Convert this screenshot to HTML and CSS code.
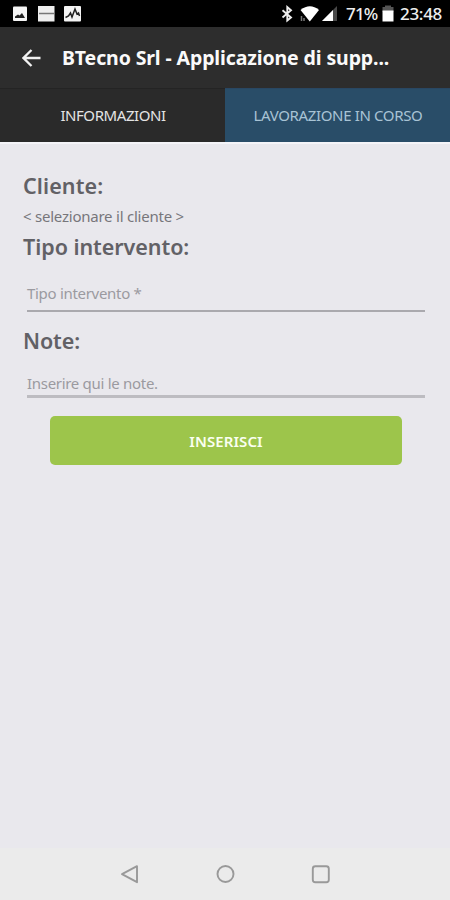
FILE: index.html
```html
<!DOCTYPE html>
<html lang="it">
<head>
<meta charset="utf-8">
<title>BTecno Srl</title>
<link rel="stylesheet" href="styles.css">
</head>
<body>
<div class="screen">
  <div class="status">
    <svg class="status-left" width="82" height="27" viewBox="0 0 82 27">
      <rect x="13" y="6.500" width="14" height="14.500" rx="1" fill="#f4f4f4"/>
      <path d="M15 18v-1.500l3-2 1.500 1 2.500-2.500 3 5z" fill="#222"/>
      <rect x="38" y="6" width="16.500" height="15.500" fill="#eee"/>
      <path d="M39 13.500h15" stroke="#777" stroke-width="1.500"/>
      <rect x="64" y="6" width="17" height="15.500" rx="1" fill="#f4f4f4"/>
      <path d="M65.500 17.500l3-1.500 2-3 1.500 4 3-8 2 5 1.500-1 1 3" stroke="#222" stroke-width="1.500" fill="none"/>
    </svg>
    <div class="status-right">
      <svg width="60" height="27" viewBox="278 0 60 27">
        <path d="M282.500 10.200l8.500 7.300-3.700 3V7l3.700 3.200-8.500 7.300" stroke="#eee" stroke-width="1.900" fill="none"/>
        <path d="M300.500 10q9.500-7.500 18.500 0l-9.200 11.500z" fill="#fff"/>
        <path d="M301.500 16v5M304 18v3" stroke="#777" stroke-width="1.500"/>
        <path d="M337 6v15h-15z" fill="#484848"/>
        <path d="M333 10v11h-11z" fill="#fff"/>
      </svg>
      <span class="percent">71%</span>
      <svg class="battery" width="12" height="27" viewBox="0 0 12 27">
        <path d="M3 5.500h6V7h2.500v5H.5V7H3z" fill="#555"/><path d="M.5 10.500h11v11H.5z" fill="#fff"/>
      </svg>
      <span class="clock">23:48</span>
    </div>
  </div>
  <header class="bar">
    <svg width="20" height="20" viewBox="0 0 20 20"><path d="M18.500 10H2M9.500 2L1.500 10l8 8" fill="none" stroke="#f2f2f2" stroke-width="2.300"/></svg>
    <h1>BTecno Srl - Applicazione di supp...</h1>
  </header>
  <nav class="tabs">
    <div class="tab"><span class="tab-info">INFORMAZIONI</span></div>
    <div class="tab active"><span class="tab-work">LAVORAZIONE IN CORSO</span></div>
  </nav>
  <main>
    <h2 class="h-client">Cliente:</h2>
    <p class="client">&lt; selezionare il cliente &gt;</p>
    <h2 class="h-type">Tipo intervento:</h2>
    <div class="field type"><span>Tipo intervento *</span></div>
    <h2 class="h-note">Note:</h2>
    <div class="field note"><span>Inserire qui le note.</span></div>
    <div class="button"><span>INSERISCI</span></div>
  </main>
  <footer>
    <svg width="450" height="52" viewBox="0 848 450 52" fill="none" stroke="#999" stroke-width="1.900" stroke-linejoin="round">
      <path d="M122 874.200l15-8v16z"/><circle cx="225.500" cy="874" r="8"/><rect x="312.800" y="866.200" width="16" height="16" rx="2.500"/>
    </svg>
  </footer>
</div>
</body>
</html>
```
FILE: styles.css
```css
* { box-sizing: border-box; margin: 0; padding: 0; }
body { width: 450px; height: 900px; overflow: hidden; font-family: "Noto Sans", sans-serif; background: #e9e8ed; }
.screen { height: 900px; display: flex; flex-direction: column; }
svg { display: block; flex: none; }
span, h1, h2, p { white-space: nowrap; }
.status { height: 27px; background: #000; color: #eee; display: flex; justify-content: space-between; }
.status-right { display: flex; width: 172px; line-height: 28px; font-size: 17px; font-weight: 500; }
.percent { width: 36px; margin-left: 8px; letter-spacing: -0.8px; }
.battery { margin-left: 0; }
.clock { margin-left: 6px; letter-spacing: -0.3px; }
.bar { height: 61px; background: #2d2d2d; display: flex; align-items: center; padding-left: 22px; }
h1 { margin-left: 20px; color: #fafafa; font-size: 19.5px; font-weight: 700; letter-spacing: -0.12px; line-height: 26px; padding-top: 1px; }
.tabs { display: flex; height: 54px; }
.tab { flex: 1; background: #2a2a2a; color: #e4e4e4; font-size: 15px; display: flex; align-items: center; justify-content: center; border-top: 1px solid #242424; padding: 0 0 2px 1px; letter-spacing: -0.43px; }
.active { background: #294d68; color: #a8c3d5; border-color: #294763; letter-spacing: -0.35px; }
main { flex: 1; border-top: 2px solid #f4f4f8; padding: 27px 25px 0 23px; color: #626166; }
h2 { font-size: 21.5px; font-weight: 600; line-height: 30px; letter-spacing: -0.05px; }
.h-client { letter-spacing: 0.1px; }
.client { font-size: 15px; line-height: 22px; margin-top: 4px; color: #77767b; letter-spacing: -0.23px; }
.h-type { margin-top: 5px; }
.field { margin-left: 4px; border-bottom: 2px solid #aaa9ae; color: #9b9aa0; font-size: 15px; line-height: 22px; letter-spacing: -0.3px; }
.type { height: 50px; padding-top: 20px; }
.h-note { margin-top: 14px; letter-spacing: -0.1px; }
.note { height: 42px; padding-top: 16px; border-bottom: 3px solid #bdbcc1; }
.button { width: 352px; height: 49px; margin: 18px 0 0 27px; border-radius: 5px; background: #9dc54b; color: #fafff0; display: flex; align-items: center; justify-content: center; font-weight: 600; font-size: 15px; letter-spacing: 0.1px; }
footer { height: 52px; background: #ebebeb; }
```
